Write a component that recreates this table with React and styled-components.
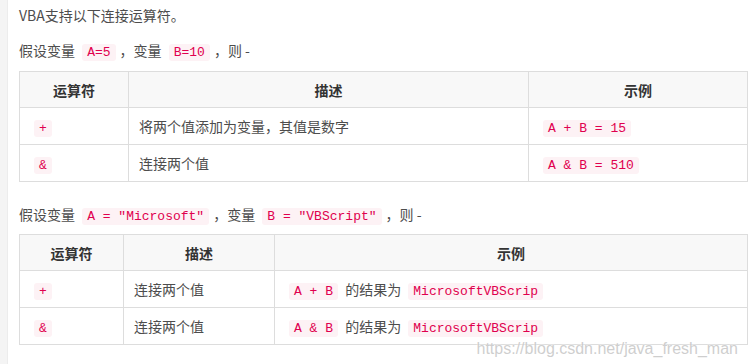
import React from 'react';
import styled, { createGlobalStyle } from 'styled-components';

const GlobalStyle = createGlobalStyle`
  html, body {
    margin: 0;
    padding: 0;
    background: #fff;
  }
  body {
    font-family: "Noto Sans CJK SC", "Liberation Sans", sans-serif;
  }
`;

const Page = styled.div`
  position: relative;
  display: flex;
  width: 748px;
  height: 364px;
  overflow: hidden;
  background: #fff;
`;

const Gutter = styled.div`
  width: 7px;
  flex: none;
  background: #f4f4f4;
  border-right: 1px solid #ececec;
`;

const Article = styled.div`
  flex: 1;
  padding: 4px 0 0 11px;
  color: #4d4d4d;
  font-size: 14px;
`;

const Para = styled.p`
  margin: 0 0 ${p => p.$gap || 13}px;
  line-height: 22px;
`;

const Code = styled.code`
  font-family: "Liberation Mono", "DejaVu Sans Mono", monospace;
  font-size: 13px;
  line-height: 15px;
  color: #e0004e;
  background: #fdf2f5;
  border-radius: 3px;
  padding: 1px 5px;
  margin: 0 4px;
  white-space: pre;
`;

const Table = styled.table`
  border-collapse: collapse;
  table-layout: fixed;
  width: 729px;
  margin-bottom: ${p => p.$gap || 0}px;
`;

const Th = styled.th`
  height: 35px;
  padding: 0 10px;
  border: 1px solid #dddddd;
  background: #f8f8f8;
  color: #333;
  font-weight: 700;
  font-size: 14px;
  text-align: center;
`;

const Td = styled.td`
  height: 36px;
  padding: 0 10px;
  border: 1px solid #dddddd;
  color: #4d4d4d;
  font-size: 14px;
  white-space: nowrap;
`;

const Watermark = styled.div`
  position: absolute;
  right: 10px;
  bottom: 6px;
  font-family: "Liberation Sans", Arial, sans-serif;
  font-size: 16px;
  color: rgba(190, 190, 190, 0.75);
  text-shadow: 0 0 2px #fff;
  pointer-events: none;
`;

const table1 = [
  ['+', '将两个值添加为变量，其值是数字', 'A + B = 15'],
  ['&', '连接两个值', 'A & B = 510'],
];

const table2 = [
  ['+', '连接两个值', 'A + B'],
  ['&', '连接两个值', 'A & B'],
];

const App = () => {
  return (
    <Page>
      <GlobalStyle />
      <Gutter />
      <Article>
        <Para>VBA支持以下连接运算符。</Para>
        <Para $gap={10}>
          假设变量 <Code>A=5</Code>，变量 <Code>B=10</Code>，则 -
        </Para>
        <Table $gap={21}>
          <colgroup>
            <col style={{ width: 109 }} />
            <col style={{ width: 400 }} />
            <col />
          </colgroup>
          <thead>
            <tr>
              <Th>运算符</Th>
              <Th>描述</Th>
              <Th>示例</Th>
            </tr>
          </thead>
          <tbody>
            {table1.map(r => (
              <tr key={r[0]}>
                <Td><Code>{r[0]}</Code></Td>
                <Td>{r[1]}</Td>
                <Td><Code>{r[2]}</Code></Td>
              </tr>
            ))}
          </tbody>
        </Table>
        <Para $gap={9}>
          假设变量 <Code>A = "Microsoft"</Code>，变量 <Code>B = "VBScript"</Code>，则 -
        </Para>
        <Table>
          <colgroup>
            <col style={{ width: 104 }} />
            <col style={{ width: 151 }} />
            <col />
          </colgroup>
          <thead>
            <tr>
              <Th>运算符</Th>
              <Th>描述</Th>
              <Th>示例</Th>
            </tr>
          </thead>
          <tbody>
            {table2.map(r => (
              <tr key={r[0]}>
                <Td><Code>{r[0]}</Code></Td>
                <Td>{r[1]}</Td>
                <Td><Code>{r[2]}</Code> 的结果为 <Code>MicrosoftVBScrip</Code></Td>
              </tr>
            ))}
          </tbody>
        </Table>
      </Article>
      <Watermark>https://blog.csdn.net/java_fresh_man</Watermark>
    </Page>
  );
};

export default App;
